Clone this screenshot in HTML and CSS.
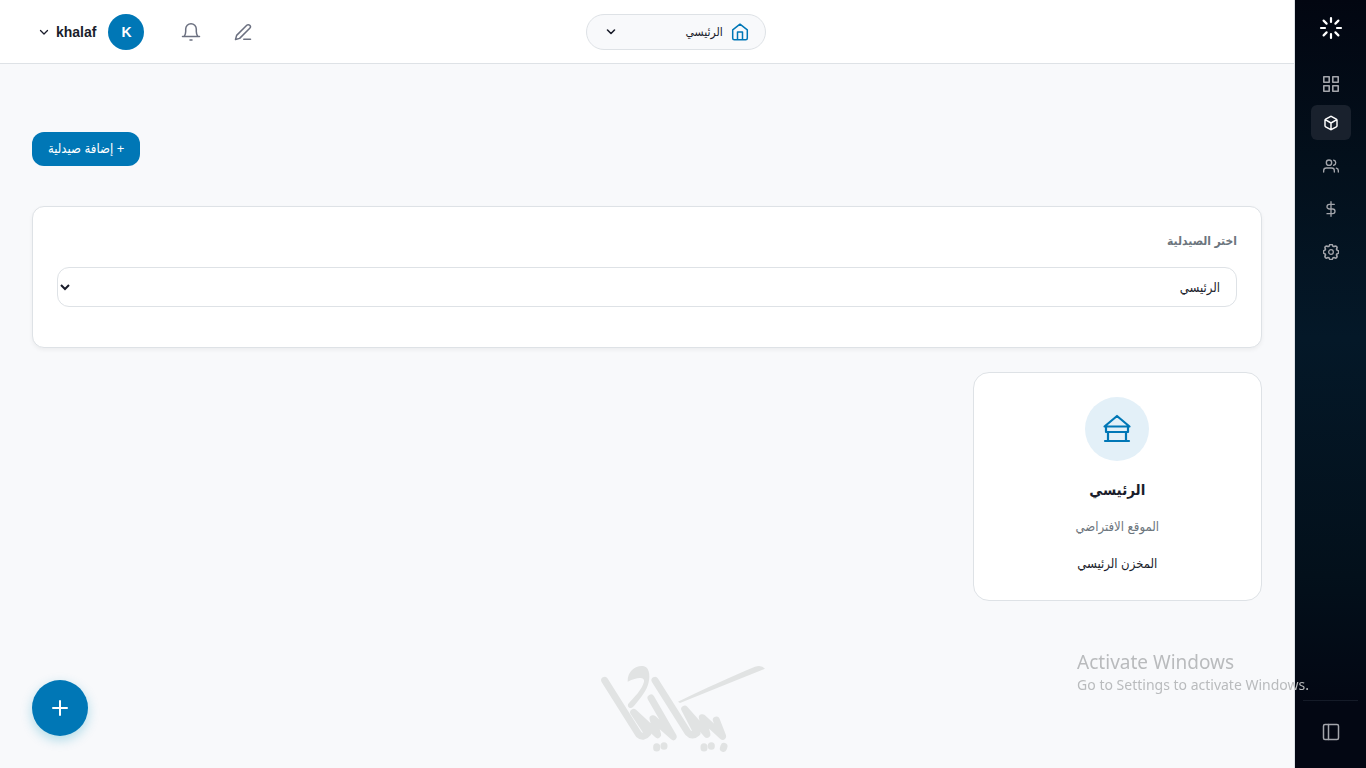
FILE: index.html
```html
<!DOCTYPE html>
<html lang="ar" dir="rtl">
<head>
<meta charset="utf-8">
<meta name="viewport" content="width=device-width, initial-scale=1">
<title>الصيدليات</title>
<link rel="stylesheet" href="styles.css">
</head>
<body>
<aside class="sidebar">
  <a class="brand" href="#" aria-label="الصفحة الأولى">
    <svg width="24" height="24" viewBox="0 0 24 24" stroke-width="2.2" stroke-linecap="butt"><path d="M12 2v4M12 18v4M2 12h4M18 12h4M4.600 4.600l3 3M16.400 16.400l3 3M4.600 19.400l3-3M16.400 7.600l3-3"/></svg>
  </a>
  <nav class="nav">
    <a class="nav-item nav-home" href="#" aria-label="لوحة التحكم">
      <svg width="20" height="20" viewBox="0 0 20 20" stroke-width="1.6" stroke-linejoin="miter"><path d="M2.800 2.800h5.400v5.400H2.800zM11.800 2.800h5.400v5.400h-5.400zM2.800 11.800h5.400v5.400H2.800zM11.800 11.800h5.400v5.400h-5.400z"/></svg>
    </a>
    <a class="nav-item active" href="#" aria-label="المخزون">
      <svg width="16" height="16" viewBox="0 0 24 24" stroke-width="2.200"><path d="M21 16V8a2 2 0 0 0-1-1.700l-7-4a2 2 0 0 0-2 0l-7 4A2 2 0 0 0 3 8v8a2 2 0 0 0 1 1.700l7 4a2 2 0 0 0 2 0l7-4a2 2 0 0 0 1-1.700zM3.300 7l8.700 5 8.700-5M12 22V12"/></svg>
    </a>
    <a class="nav-item" href="#" aria-label="المستخدمون">
      <svg width="16" height="16" viewBox="0 0 24 24" stroke-width="2"><path d="M17 21v-2a4 4 0 0 0-4-4H5a4 4 0 0 0-4 4v2M23 21v-2a4 4 0 0 0-3-3.900M16 3.100a4 4 0 0 1 0 7.800"/><circle cx="9" cy="7" r="4"/></svg>
    </a>
    <a class="nav-item" href="#" aria-label="المالية">
      <svg width="16" height="16" viewBox="0 0 24 24" stroke-width="2"><path d="M12 1v22M17 5H9.500a3.500 3.500 0 0 0 0 7h5a3.500 3.500 0 0 1 0 7H6"/></svg>
    </a>
    <a class="nav-item" href="#" aria-label="الإعدادات">
      <svg width="16" height="16" viewBox="0 0 24 24" stroke-width="1.900"><path d="M10.300 4.300c.4-1.700 2.900-1.700 3.400 0a1.700 1.700 0 0 0 2.600 1.100c1.500-.9 3.300.8 2.400 2.400a1.700 1.700 0 0 0 1 2.500c1.800.4 1.800 2.900 0 3.400a1.700 1.700 0 0 0-1 2.600c.9 1.500-.9 3.300-2.400 2.400a1.700 1.700 0 0 0-2.600 1c-.4 1.800-2.900 1.800-3.400 0a1.700 1.700 0 0 0-2.600-1c-1.500.9-3.300-.9-2.400-2.400a1.700 1.700 0 0 0-1-2.600c-1.800-.4-1.800-2.900 0-3.400a1.700 1.700 0 0 0 1-2.500c-.9-1.600.9-3.300 2.400-2.400 1 .6 2.300.1 2.600-1.100z" transform="translate(-3.600 -3.600) scale(1.300)"/><circle cx="12" cy="12" r="3.500"/></svg>
    </a>
  </nav>
  <div class="sidebar-foot">
    <button class="nav-item" type="button" aria-label="طي القائمة">
      <svg width="20" height="20" viewBox="0 0 20 20" stroke-width="1.500"><rect x="2.500" y="2.500" width="15" height="15" rx="1.500"/><path d="M7.500 2.500v15"/></svg>
    </button>
  </div>
</aside>
<div class="page">
  <header class="topbar">
    <div class="topbar-start"></div>
    <button class="location" type="button">
      <svg class="blue" width="18" height="18" viewBox="0 0 18 18" stroke-width="1.500"><path d="M1.700 6.800 9 1.200l7.300 5.600v8.400a1.500 1.500 0 0 1-1.500 1.500H3.200a1.500 1.500 0 0 1-1.500-1.500zM6.500 16.500V9h5v7.500"/></svg>
      <span class="location-name">الرئيسي</span>
      <svg width="12" height="12" viewBox="0 0 12 12" stroke-width="1.600"><path d="M2.500 4 6 7.500 9.500 4"/></svg>
    </button>
    <div class="tools">
      <button class="icon-button" type="button" aria-label="ملاحظة">
        <svg width="18" height="18" viewBox="0 0 24 24" stroke-width="2"><path d="M13 21.500h9M17 3a2.800 2.800 0 0 1 4 4L7.500 20.500 2 22l1.500-5.500z"/></svg>
      </button>
      <button class="icon-button" type="button" aria-label="الإشعارات">
        <svg width="20" height="20" viewBox="0 0 20 20" stroke-width="1.500"><path d="M1.500 14.500h17M3.200 14.500c1-1.500 1.500-3 1.500-5V7a5.300 5.300 0 0 1 10.600 0v2.500c0 2 .5 3.500 1.500 5M9 18h2"/></svg>
      </button>
      <button class="user" type="button">
        <span class="avatar">K</span>
        <span>khalaf</span>
        <svg width="12" height="12" viewBox="0 0 12 12" stroke-width="1.300"><path d="M2.500 4.500 6 8l3.500-3.500"/></svg>
      </button>
    </div>
  </header>
  <main class="content">
    <div class="actions"><button class="primary" type="button">+ إضافة صيدلية</button></div>
    <section class="panel filter">
      <label for="pharmacy">اختر الصيدلية</label>
      <select id="pharmacy"><option>الرئيسي</option></select>
    </section>
    <div class="cards">
      <article class="panel card">
        <div class="card-icon">
          <svg width="32" height="32" viewBox="0 0 32 32" stroke-width="2.200" stroke-linecap="butt" stroke-linejoin="miter"><path d="M3.500 13.500 16 3l12.500 10.500zM5 13v6h22v-6M7 19v9M25 19v9M4 28h24"/></svg>
        </div>
        <h2>الرئيسي</h2>
        <p class="muted">الموقع الافتراضي</p>
        <p>المخزن الرئيسي</p>
      </article>
    </div>
  </main>
  <button class="fab" type="button" aria-label="إضافة">
    <svg width="20" height="20" viewBox="0 0 20 20" stroke-width="2" stroke-linecap="butt"><path d="M3 10h14M10 3v14"/></svg>
  </button>
  <svg class="watermark" width="190" height="105" viewBox="0 0 570 315" stroke-width="21" aria-hidden="true">
    <path d="M44 76 146 238q14 13 27-3L131 172l72 67-14-48 61 54L183 129"/>
    <path d="M195 76 294 233q13 14 27 1L284 162l67 76-14-50 61 56-19-49"/>
    <path d="M200 279v-4M222 274v-2M342 279v-4M364 274v-2M400 280l2-6"/>
    <path class="solid" d="M264 140C340 103 430 61 495 35q20-6 30 6Q400 91 270 144zM113 80C112 45 142 29 162 34c20 5 18 39 12 55-8 25-31 51-45 67-9 8-19-2-14-10 17-20 41-41 47-66 3-12-15-18-49 0z"/>
  </svg>
</div>
<div class="os-notice" dir="ltr" lang="en"><strong>Activate Windows</strong><span>Go to Settings to activate Windows.</span></div>
</body>
</html>
```
FILE: styles.css
```css
* { box-sizing: border-box; }
body {
  margin: 0;
  min-height: 100vh;
  display: flex;
  background: #f8f9fb;
  color: #1a1d2b;
  font: 13px/20px "Liberation Sans", "DejaVu Sans Condensed", "DejaVu Sans", sans-serif;
}
button, select { font: inherit; color: inherit; }
button { border: 0; background: none; padding: 0; cursor: pointer; }
svg {
  display: block;
  flex: none;
  fill: none;
  stroke: currentColor;
  stroke-linecap: round;
  stroke-linejoin: round;
}
h2, p { margin: 0; }

.sidebar {
  width: 72px;
  flex: none;
  display: flex;
  flex-direction: column;
  border-left: 1px solid #dee2e6;
  background: linear-gradient(#020611, #03101c 22%, #041828 44%, #03101b 75%, #030713 92%);
}
.brand { height: 56px; display: grid; place-items: center; color: #fff; }
.nav {
  flex: 1;
  display: flex;
  flex-direction: column;
  align-items: center;
  gap: 8px;
  padding-top: 10px;
}
.nav-item {
  width: 40px;
  height: 35px;
  display: grid;
  place-items: center;
  border-radius: 6px;
  color: #a3a5ab;
}
.nav-home { margin-bottom: -4px; }
.nav-item.active { background: #19212d; color: #fff; }
.sidebar-foot {
  height: 68px;
  margin: 0 8px;
  display: grid;
  place-items: center;
  padding-bottom: 6px;
  border-top: 1px solid #151b28;
}

.page { flex: 1; min-width: 0; display: flex; flex-direction: column; }
.topbar {
  height: 64px;
  display: flex;
  align-items: center;
  justify-content: space-between;
  padding: 0 32px;
  background: #fff;
  border-bottom: 1px solid #dee2e6;
}
.topbar-start { width: 174px; }
.location {
  width: 180px;
  height: 36px;
  display: flex;
  align-items: center;
  gap: 8px;
  padding: 0 16px 0 18px;
  border: 1px solid #dee2e6;
  border-radius: 18px;
  background: #f8f9fb;
  font-size: 12px;
}
.location-name { flex: 1; text-align: start; }
.blue { color: #0077b6; }
.tools { display: flex; align-items: center; gap: 12px; }
.icon-button {
  width: 40px;
  height: 40px;
  display: grid;
  place-items: center;
  color: #6b7080;
}
.user {
  display: flex;
  align-items: center;
  gap: 12px;
  padding: 0 15px 0 6px;
  font-size: 14px;
  font-weight: 700;
}
.user svg { margin-right: -6px; }
.avatar {
  width: 36px;
  height: 36px;
  display: grid;
  place-items: center;
  border-radius: 50%;
  background: #0077b6;
  color: #fff;
}

.content { padding: 68px 32px 32px; }
.actions { display: flex; justify-content: flex-end; margin-bottom: 40px; }
.primary {
  height: 34px;
  padding: 0 16px;
  border-radius: 12px;
  background: #0077b6;
  color: #fff;
}
.panel { background: #fff; border: 1px solid #dee2e6; }
.filter {
  padding: 24px 24px 40px;
  border-radius: 12px;
  box-shadow: 0 2px 4px rgb(0 0 0 / 5%);
}
.filter label {
  display: block;
  margin-bottom: 16px;
  color: #6c757d;
  font-size: 12px;
  font-weight: 700;
}
.filter select {
  display: block;
  width: 100%;
  height: 40px;
  padding: 0 12px 0 0;
  border: 1px solid #dee2e6;
  border-radius: 12px;
  background: #fff;
}
.cards {
  display: grid;
  grid-template-columns: repeat(auto-fill, minmax(280px, 1fr));
  gap: 24px;
  margin-top: 24px;
}
.card {
  display: flex;
  flex-direction: column;
  align-items: center;
  padding: 24px;
  border-radius: 16px;
}
.card-icon {
  width: 64px;
  height: 64px;
  display: grid;
  place-items: center;
  margin-bottom: 16px;
  border-radius: 50%;
  background: #e3f0f8;
  color: #0077b6;
}
.card h2 { margin-bottom: 12px; font-size: 15px; line-height: 26px; }
.card p { line-height: 24px; }
.card .muted { margin-bottom: 13px; color: #6c757d; }

.fab {
  position: fixed;
  left: 32px;
  bottom: 32px;
  width: 56px;
  height: 56px;
  display: grid;
  place-items: center;
  border-radius: 50%;
  background: #0077b6;
  color: #fff;
  box-shadow: 0 4px 12px rgb(0 150 190 / 30%);
}
.watermark {
  position: fixed;
  left: 590px;
  bottom: 8px;
  color: #e1e3e3;
}
.watermark .solid { fill: currentColor; stroke: none; }
.os-notice {
  position: fixed;
  right: 57px;
  bottom: 73px;
  display: flex;
  flex-direction: column;
  color: #b9bbbd;
  font-family: "Noto Sans", "Open Sans", sans-serif;
  font-size: 14px;
  pointer-events: none;
}
.os-notice strong { font-size: 19px; line-height: 26px; font-weight: 400; }
```
